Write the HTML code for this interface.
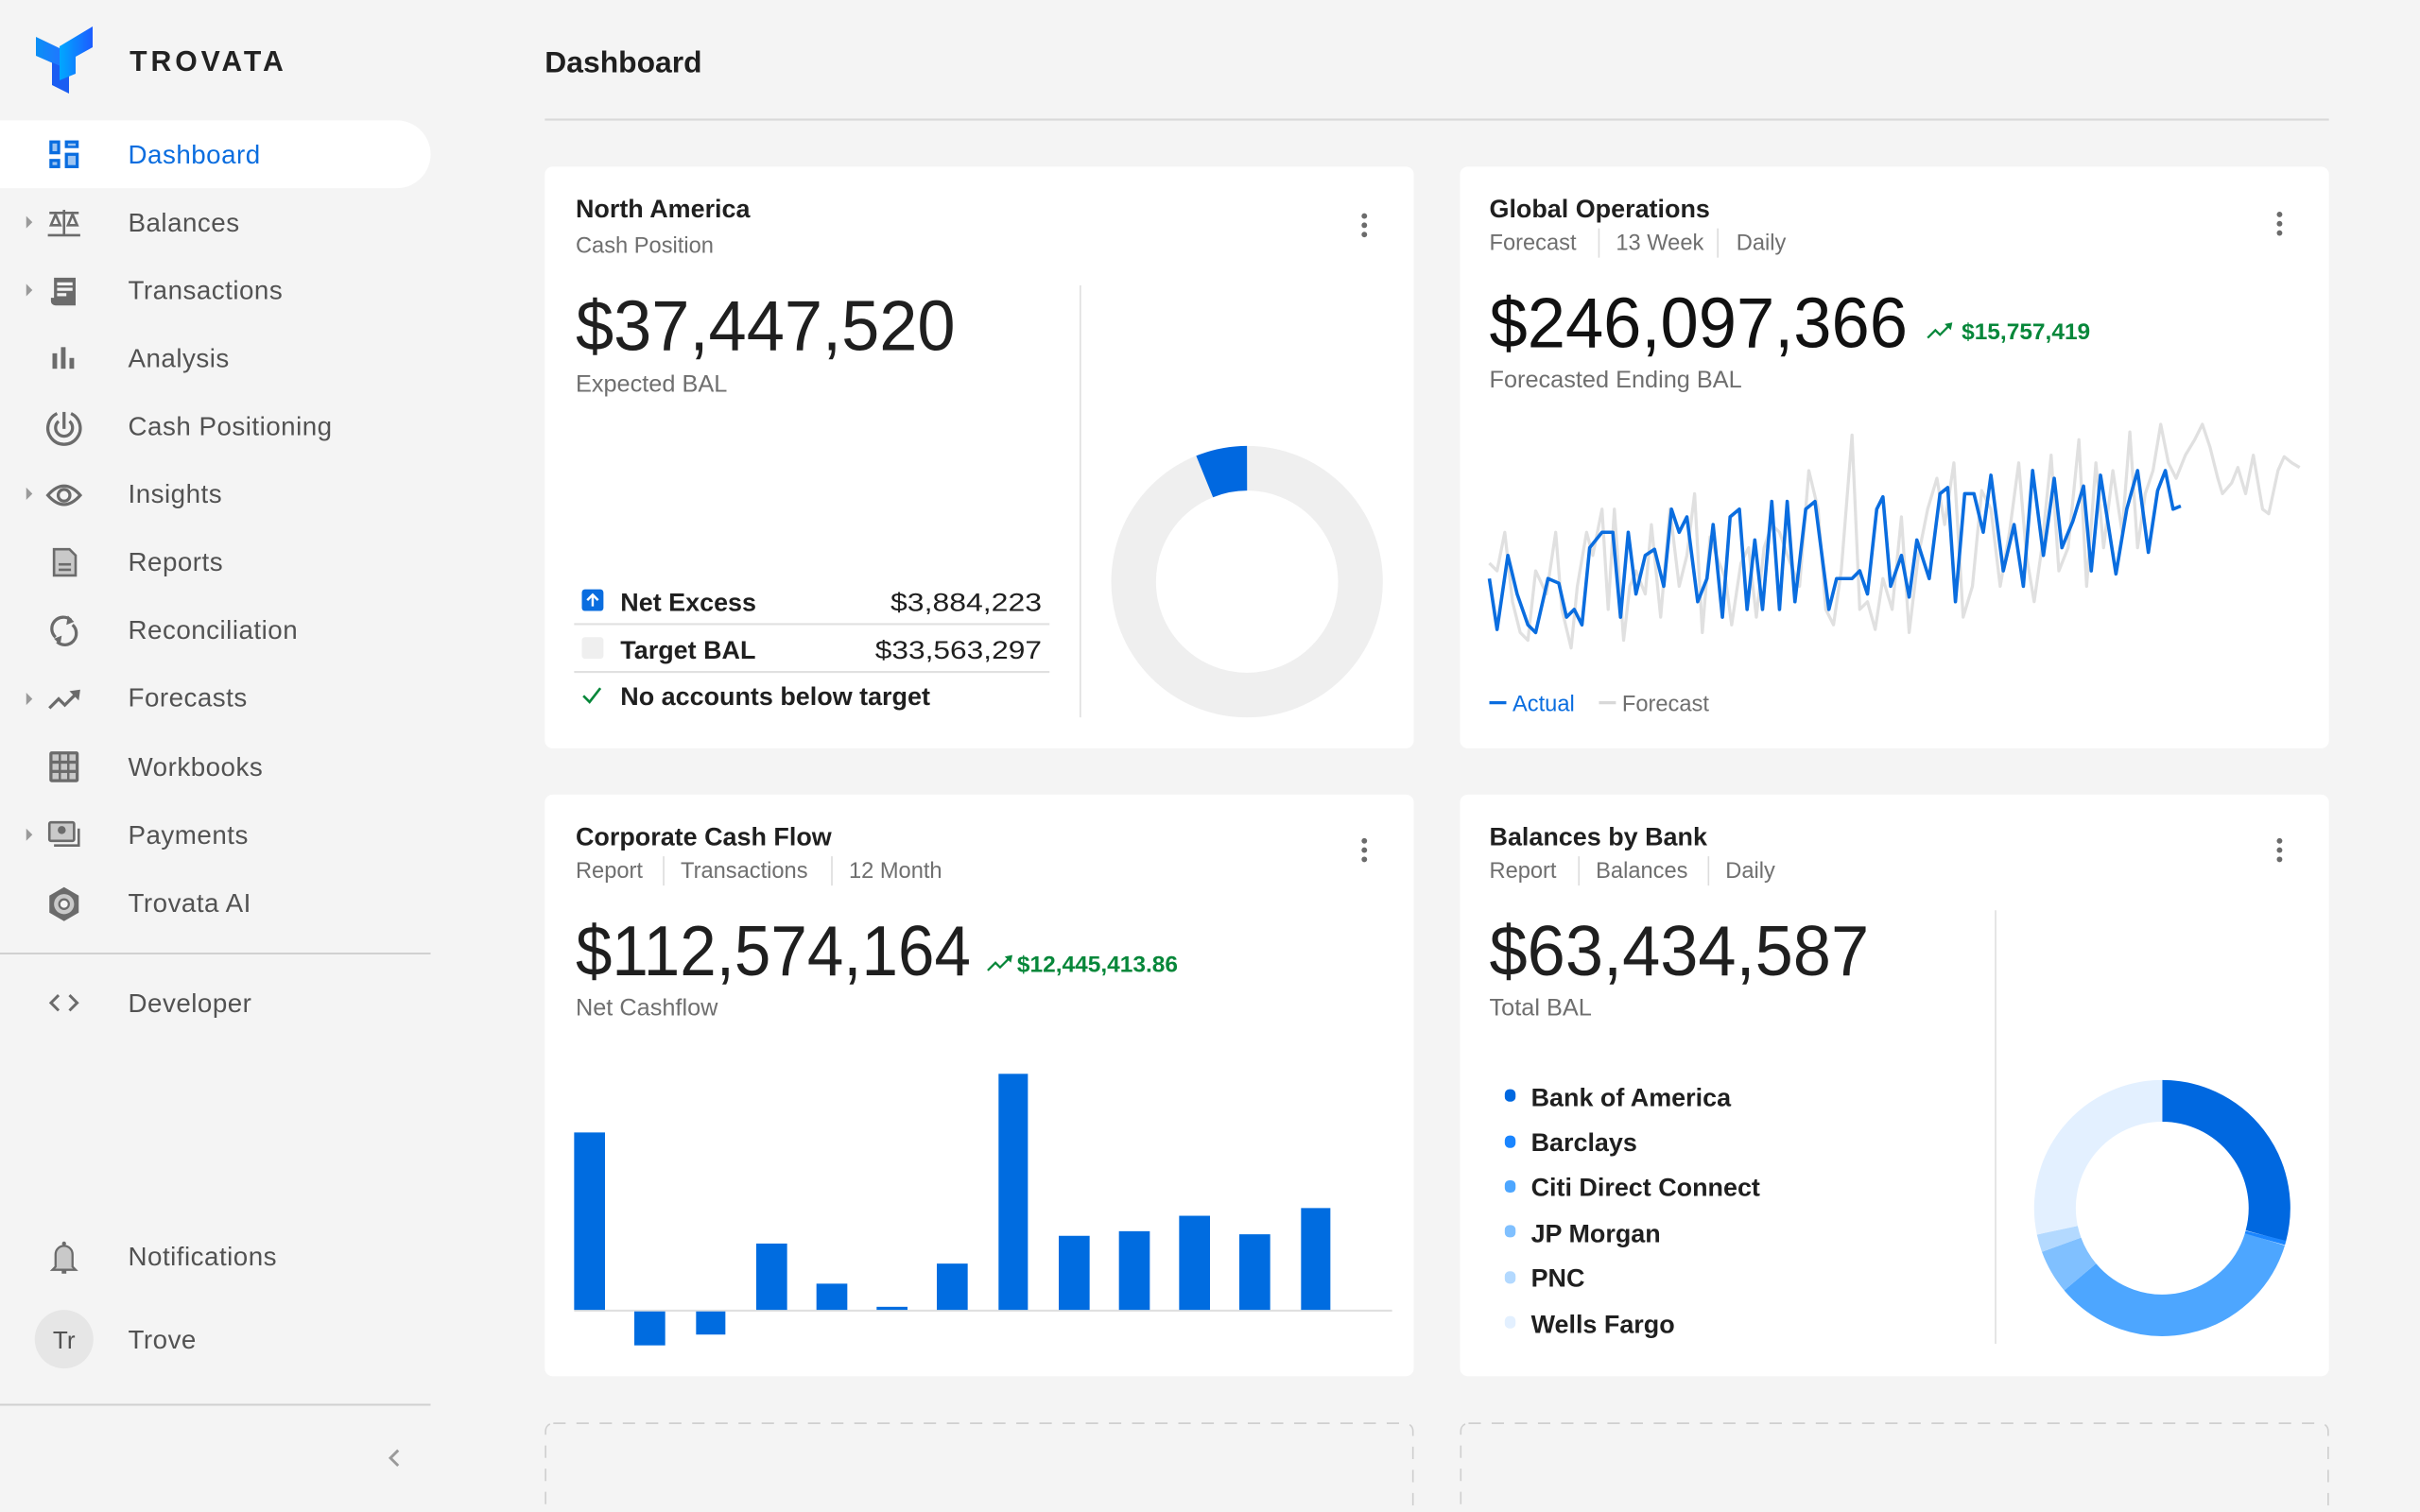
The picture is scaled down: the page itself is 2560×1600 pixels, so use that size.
<!DOCTYPE html>
<html><head><meta charset="utf-8"><style>
html,body{margin:0;padding:0;background:#f4f4f4;width:2560px;height:1600px;overflow:hidden}
svg{display:block}
text{font-family:"Liberation Sans",Arial,sans-serif}
.nav{font-size:17px;fill:#525252;letter-spacing:0.3px}
.ct{font-size:16.5px;font-weight:700;fill:#1f1f1f}
.cs{font-size:14.5px;fill:#6f6f6f}
.big{font-size:46px;fill:#1f1f1f}
.lbl{font-size:15.5px;fill:#6f6f6f}
.row{font-size:16.5px;font-weight:700;fill:#1f1f1f}
.grn{font-size:15px;font-weight:700;fill:#07873a}
.ic{fill:#6b6b6b}
</style></head><body>
<svg width="2560" height="1600" viewBox="0 0 1568 980" xmlns="http://www.w3.org/2000/svg">
<defs>
<linearGradient id="lg1" x1="0" x2="1" y1="0" y2="0"><stop offset="0" stop-color="#00a8ff"/><stop offset="1" stop-color="#1d5cff"/></linearGradient>
<linearGradient id="lg2" x1="0" x2="1"><stop offset="0" stop-color="#0a8ff5"/><stop offset="1" stop-color="#1f78ff"/></linearGradient>
</defs>
<rect width="1568" height="980" fill="#f4f4f4"/>

<g transform="scale(0.6125)">
<polygon points="38,39 63,51 63,70 38,59" fill="url(#lg2)"/>
<polygon points="55,66 73,74 73,99 55,90" fill="#1a5df2"/>
<polygon points="63,49 98,28 98,50 80,60 80,78 63,85" fill="url(#lg1)"/>
</g>
<text x="84" y="46" style="font-size:18.5px;font-weight:700;letter-spacing:2.4px;fill:#222">TROVATA</text>

<path d="M0 78 H257 A22 22 0 0 1 257 122 H0 Z" fill="#fff"/>

<g fill="#0a6ddf"><rect x="32" y="91" width="7" height="9"/><rect x="42" y="91" width="9" height="5"/><rect x="32" y="103" width="7" height="6"/><rect x="42" y="99" width="9" height="10"/></g>
<g fill="#9cc4f2"><rect x="34" y="93" width="3" height="5"/><rect x="44" y="93" width="5" height="1.5"/><rect x="34" y="105" width="3" height="2"/><rect x="44" y="101" width="5" height="6"/></g>
<g class="nav" style="font-size:17px">
<text x="83" y="106" style="fill:#0a6ddf">Dashboard</text>
<text x="83" y="150">Balances</text>
<text x="83" y="194">Transactions</text>
<text x="83" y="238">Analysis</text>
<text x="83" y="282">Cash Positioning</text>
<text x="83" y="326">Insights</text>
<text x="83" y="370">Reports</text>
<text x="83" y="414">Reconciliation</text>
<text x="83" y="458">Forecasts</text>
<text x="83" y="503">Workbooks</text>
<text x="83" y="547">Payments</text>
<text x="83" y="591">Trovata AI</text>
<text x="83" y="656">Developer</text>
<text x="83" y="820">Notifications</text>
<text x="83" y="874">Trove</text>
</g>
<g fill="#9a9a9a">
<polygon points="17,140 21,144 17,148"/><polygon points="17,184 21,188 17,192"/><polygon points="17,316 21,320 17,324"/><polygon points="17,449 21,453 17,457"/><polygon points="17,537 21,541 17,545"/>
</g>
<g stroke="#6b6b6b" stroke-width="1.6" fill="none"><line x1="32" y1="138" x2="51" y2="138"/><line x1="41.5" y1="136" x2="41.5" y2="152"/><path d="M33 146 L36 139 L39 146 Z M44 146 L47 139 L50 146 Z"/><line x1="31" y1="152.5" x2="52" y2="152.5"/></g>
<g class="ic"><path d="M35 180 H49 V198 H37 Q33 198 33 195 V193 H35 Z"/></g><g fill="#f4f4f4"><rect x="37" y="183" width="10" height="2"/><rect x="37" y="186.5" width="10" height="2"/><rect x="37" y="190" width="6" height="2"/></g>
<g class="ic"><rect x="34" y="229" width="3" height="10"/><rect x="39.5" y="225" width="3" height="14"/><rect x="45" y="232" width="3" height="7"/></g>
<g stroke="#6b6b6b" stroke-width="2" fill="none"><path d="M37 268 A10.5 10.5 0 1 0 46 268"/><path d="M38 273 A5.5 5.5 0 1 0 45 273"/><line x1="41.5" y1="267" x2="41.5" y2="278"/></g>
<path d="M31 321 Q41.5 309 52 321 Q41.5 333 31 321 Z" fill="none" stroke="#6b6b6b" stroke-width="2"/><circle cx="41.5" cy="321" r="3.8" fill="none" stroke="#6b6b6b" stroke-width="2"/>
<path d="M35 356 H45 L49 360 V373 H35 Z" fill="#c9c9c9" stroke="#6b6b6b" stroke-width="1.6"/><rect x="38" y="365" width="8" height="1.6" fill="#6b6b6b"/><rect x="38" y="368.5" width="8" height="1.6" fill="#6b6b6b"/>
<g stroke="#6b6b6b" stroke-width="2" fill="none"><path d="M36 413 A7 7 0 0 1 46 402"/><path d="M47 405 A7 7 0 0 1 37 416"/></g><polygon points="44,399 48,403 43,405" fill="#6b6b6b"/><polygon points="39,418 35,414 40,412" fill="#6b6b6b"/>
<g stroke="#6b6b6b" stroke-width="2" fill="none"><polyline points="32,459 38,453 42,457 50,449"/></g><polygon points="45,448 52,447 51,454" fill="#6b6b6b"/>
<rect x="32" y="487" width="19" height="20" rx="1.5" fill="#6b6b6b"/><g fill="#c9c9c9"><rect x="34" y="489" width="4" height="4"/><rect x="39.5" y="489" width="4" height="4"/><rect x="45" y="489" width="4" height="4"/><rect x="34" y="495" width="4" height="4"/><rect x="39.5" y="495" width="4" height="4"/><rect x="45" y="495" width="4" height="4"/><rect x="34" y="501" width="4" height="4"/><rect x="39.5" y="501" width="4" height="4"/><rect x="45" y="501" width="4" height="4"/></g>
<rect x="32" y="533" width="16" height="12" rx="1" fill="#c9c9c9" stroke="#6b6b6b" stroke-width="1.6"/><circle cx="40" cy="538" r="2.6" fill="#6b6b6b"/><path d="M35 548 H51 V537" fill="none" stroke="#6b6b6b" stroke-width="1.6"/>
<polygon points="41.5,575 51,580.5 51,591.5 41.5,597 32,591.5 32,580.5" fill="#6b6b6b"/><circle cx="41.5" cy="586" r="6.5" fill="#c9c9c9"/><circle cx="41.5" cy="586" r="3.8" fill="#6b6b6b"/><circle cx="41.5" cy="586" r="2.4" fill="#f4f4f4"/>
<line x1="0" y1="618" x2="279" y2="618" stroke="#d0d0d0" stroke-width="1.2"/>
<line x1="0" y1="910.5" x2="279" y2="910.5" stroke="#d0d0d0" stroke-width="1.2"/>
<g stroke="#6b6b6b" stroke-width="1.8" fill="none"><polyline points="38,645 33,650 38,655"/><polyline points="45,645 50,650 45,655"/></g>
<path d="M36 821 V813 A5.5 5.5 0 0 1 47 813 V821 L49 823 H34 Z" fill="#c9c9c9" stroke="#6b6b6b" stroke-width="1.4"/><circle cx="41.5" cy="806" r="1.3" fill="#6b6b6b"/><rect x="40" y="823.5" width="3" height="2" fill="#6b6b6b"/>
<circle cx="41.5" cy="868" r="19" fill="#e6e6e6"/><text x="41.5" y="874" text-anchor="middle" style="font-size:16px;fill:#525252">Tr</text>
<polyline points="258,940 253,945 258,950" fill="none" stroke="#9a9a9a" stroke-width="1.8"/>

<text x="353" y="47" style="font-size:19.5px;font-weight:700;fill:#1f1f1f">Dashboard</text>
<line x1="353" y1="77.5" x2="1509" y2="77.5" stroke="#d9d9d9" stroke-width="1.3"/>

<rect x="353" y="108" width="563" height="377" rx="5" fill="#fff"/>
<rect x="946" y="108" width="563" height="377" rx="5" fill="#fff"/>
<rect x="353" y="515" width="563" height="377" rx="5" fill="#fff"/>
<rect x="946" y="515" width="563" height="377" rx="5" fill="#fff"/>
<rect x="353.5" y="922.5" width="562" height="70" rx="5" fill="none" stroke="#cfcfcf" stroke-dasharray="8 7"/>
<rect x="946.5" y="922.5" width="562" height="70" rx="5" fill="none" stroke="#cfcfcf" stroke-dasharray="8 7"/>

<g fill="#6b6b6b">
<circle cx="884" cy="140" r="1.8"/><circle cx="884" cy="146" r="1.8"/><circle cx="884" cy="152" r="1.8"/>
<circle cx="1477" cy="139" r="1.8"/><circle cx="1477" cy="145" r="1.8"/><circle cx="1477" cy="151" r="1.8"/>
<circle cx="884" cy="545" r="1.8"/><circle cx="884" cy="551" r="1.8"/><circle cx="884" cy="557" r="1.8"/>
<circle cx="1477" cy="545" r="1.8"/><circle cx="1477" cy="551" r="1.8"/><circle cx="1477" cy="557" r="1.8"/>
</g>

<text x="373" y="141" class="ct">North America</text>
<text x="373" y="164" class="cs">Cash Position</text>
<text x="373" y="227" class="big" textLength="246" lengthAdjust="spacingAndGlyphs">$37,447,520</text>
<text x="373" y="254" class="lbl">Expected BAL</text>
<line x1="700" y1="185" x2="700" y2="465" stroke="#e0e0e0"/>
<rect x="377" y="382" width="14" height="14" rx="2" fill="#0a6ddf"/><path d="M384 393 V386 M380.5 389 L384 385.5 L387.5 389" stroke="#fff" stroke-width="1.5" fill="none"/>
<text x="402" y="396" class="row">Net Excess</text>
<text x="675" y="396" class="row" text-anchor="end" style="font-weight:400" textLength="98" lengthAdjust="spacingAndGlyphs">$3,884,223</text>
<line x1="372" y1="404.5" x2="680" y2="404.5" stroke="#e0e0e0" stroke-width="1.3"/>
<rect x="377" y="413" width="14" height="14" rx="2" fill="#efefef"/>
<text x="402" y="427" class="row">Target BAL</text>
<text x="675" y="427" class="row" text-anchor="end" style="font-weight:400" textLength="108" lengthAdjust="spacingAndGlyphs">$33,563,297</text>
<line x1="372" y1="435.5" x2="680" y2="435.5" stroke="#e0e0e0" stroke-width="1.3"/>
<polyline points="378,451 382,455 389,446" fill="none" stroke="#07873a" stroke-width="1.6"/>
<text x="402" y="457" class="row">No accounts below target</text>
<circle cx="808" cy="377" r="73.5" fill="none" stroke="#efefef" stroke-width="29"/>
<path d="M808 303.5 A73.5 73.5 0 0 0 780.5 308.9" fill="none" stroke="#0068e0" stroke-width="29"/>

<text x="965" y="141" class="ct">Global Operations</text>
<text x="965" y="162" class="cs">Forecast</text><line x1="1036" y1="148" x2="1036" y2="167" stroke="#ddd"/>
<text x="1047" y="162" class="cs">13 Week</text><line x1="1113" y1="148" x2="1113" y2="167" stroke="#ddd"/>
<text x="1125" y="162" class="cs">Daily</text>
<text x="965" y="225" class="big" textLength="271" lengthAdjust="spacingAndGlyphs" style="fill:#111">$246,097,366</text>
<polyline points="1249,219 1254,214 1257,217 1263,211" fill="none" stroke="#07873a" stroke-width="1.4"/><polygon points="1260,210 1265,209 1264,214" fill="#07873a"/>
<text x="1271" y="220" class="grn">$15,757,419</text>
<text x="965" y="251" class="lbl">Forecasted Ending BAL</text>
<polyline fill="none" stroke="#e0e0e0" stroke-width="2" stroke-linejoin="round" points="965,365 970,370 975,345 980,390 985,410 990,415 995,370 1002,385 1008,345 1012,395 1018,420 1022,380 1028,345 1032,360 1038,330 1042,395 1046,330 1052,415 1056,380 1060,370 1066,385 1070,340 1076,400 1082,330 1088,380 1093,360 1098,320 1103,410 1108,348 1112,360 1118,375 1122,405 1128,365 1133,355 1138,400 1143,355 1148,340 1153,345 1160,365 1166,380 1172,305 1178,330 1183,395 1188,405 1193,370 1200,282 1205,395 1210,390 1215,408 1220,375 1226,395 1232,335 1237,410 1243,360 1249,330 1255,310 1260,340 1266,300 1272,400 1278,380 1284,318 1290,330 1296,380 1302,345 1308,300 1313,360 1318,390 1323,355 1329,295 1334,370 1340,355 1347,285 1352,380 1358,300 1363,355 1369,305 1375,345 1380,280 1385,355 1390,320 1395,305 1400,275 1405,300 1410,310 1416,295 1422,285 1427,275 1432,290 1437,310 1440,320 1446,313 1450,303 1455,320 1460,295 1466,330 1470,333 1476,305 1480,296 1485,300 1490,303"/>
<polyline fill="none" stroke="#0a6ddf" stroke-width="2.2" stroke-linejoin="round" points="965,375 970,408 977,360 983,385 990,405 995,410 1003,375 1010,378 1015,400 1020,395 1025,405 1030,355 1038,345 1045,345 1050,400 1055,345 1060,385 1066,360 1072,356 1078,380 1083,330 1088,345 1093,335 1100,390 1106,375 1110,340 1116,400 1121,335 1127,330 1132,395 1137,350 1142,395 1148,325 1153,395 1158,325 1163,390 1170,330 1176,325 1185,395 1190,375 1200,375 1205,370 1210,385 1216,330 1220,322 1225,380 1232,360 1237,387 1242,350 1250,375 1257,320 1262,316 1267,390 1273,320 1279,320 1285,345 1290,308 1298,370 1305,340 1311,380 1317,305 1324,360 1331,310 1336,355 1343,338 1350,315 1355,370 1361,308 1366,340 1371,372 1378,330 1385,305 1392,358 1398,318 1403,305 1408,330 1413,328"/>
<line x1="965" y1="455.5" x2="976" y2="455.5" stroke="#0a6ddf" stroke-width="2"/>
<text x="980" y="461" style="font-size:14.5px;fill:#0a6ddf">Actual</text>
<line x1="1036" y1="455.5" x2="1047" y2="455.5" stroke="#d8d8d8" stroke-width="2"/>
<text x="1051" y="461" class="cs">Forecast</text>

<text x="373" y="548" class="ct">Corporate Cash Flow</text>
<text x="373" y="569" class="cs">Report</text><line x1="430" y1="555" x2="430" y2="574" stroke="#ddd"/>
<text x="441" y="569" class="cs">Transactions</text><line x1="539" y1="555" x2="539" y2="574" stroke="#ddd"/>
<text x="550" y="569" class="cs">12 Month</text>
<text x="373" y="632" class="big" textLength="256" lengthAdjust="spacingAndGlyphs">$112,574,164</text>
<polyline points="640,629 645,624 648,627 654,621" fill="none" stroke="#07873a" stroke-width="1.4"/><polygon points="651,620 656,619 655,624" fill="#07873a"/>
<text x="659" y="630" class="grn">$12,445,413.86</text>
<text x="373" y="658" class="lbl">Net Cashflow</text>
<line x1="372" y1="849.5" x2="902" y2="849.5" stroke="#e0e0e0" stroke-width="1.3"/>
<g fill="#006ce0">
<rect x="372" y="734" width="20" height="115"/>
<rect x="411" y="850" width="20" height="22"/>
<rect x="451" y="850" width="19" height="15"/>
<rect x="490" y="806" width="20" height="43"/>
<rect x="529" y="832" width="20" height="17"/>
<rect x="568" y="847" width="20" height="2"/>
<rect x="607" y="819" width="20" height="30"/>
<rect x="647" y="696" width="19" height="153"/>
<rect x="686" y="801" width="20" height="48"/>
<rect x="725" y="798" width="20" height="51"/>
<rect x="764" y="788" width="20" height="61"/>
<rect x="803" y="800" width="20" height="49"/>
<rect x="843" y="783" width="19" height="66"/>
</g>

<text x="965" y="548" class="ct">Balances by Bank</text>
<text x="965" y="569" class="cs">Report</text><line x1="1023" y1="555" x2="1023" y2="574" stroke="#ddd"/>
<text x="1034" y="569" class="cs">Balances</text><line x1="1107" y1="555" x2="1107" y2="574" stroke="#ddd"/>
<text x="1118" y="569" class="cs">Daily</text>
<text x="965" y="632" class="big" textLength="246" lengthAdjust="spacingAndGlyphs">$63,434,587</text>
<text x="965" y="658" class="lbl">Total BAL</text>
<line x1="1293" y1="590" x2="1293" y2="871" stroke="#e0e0e0"/>
<g>
<rect x="975" y="706" width="7" height="8" rx="3" fill="#0068e0"/><text x="992" y="717" class="row">Bank of America</text>
<rect x="975" y="736" width="7" height="8" rx="3" fill="#1a85ff"/><text x="992" y="746" class="row">Barclays</text>
<rect x="975" y="765" width="7" height="8" rx="3" fill="#4da6ff"/><text x="992" y="775" class="row">Citi Direct Connect</text>
<rect x="975" y="794" width="7" height="8" rx="3" fill="#80c0ff"/><text x="992" y="805" class="row">JP Morgan</text>
<rect x="975" y="824" width="7" height="8" rx="3" fill="#b3d9ff"/><text x="992" y="834" class="row">PNC</text>
<rect x="975" y="853" width="7" height="8" rx="3" fill="#e3f0ff"/><text x="992" y="864" class="row">Wells Fargo</text>
</g>
<g fill="none" stroke-width="27">
<path d="M1401 713.5 A69.5 69.5 0 0 1 1468.1 801.0" stroke="#0068e0"/>
<path d="M1468.1 801.0 A69.5 69.5 0 0 1 1467.5 803.3" stroke="#1a85ff"/>
<path d="M1467.5 803.3 A69.5 69.5 0 0 1 1347.8 827.7" stroke="#4da6ff"/>
<path d="M1347.8 827.7 A69.5 69.5 0 0 1 1335.7 806.8" stroke="#80c0ff"/>
<path d="M1335.7 806.8 A69.5 69.5 0 0 1 1333.0 797.4" stroke="#b3d9ff"/>
<path d="M1333.0 797.4 A69.5 69.5 0 0 1 1401 713.5" stroke="#e3f0ff"/>
</g>
</svg>
</body></html>
